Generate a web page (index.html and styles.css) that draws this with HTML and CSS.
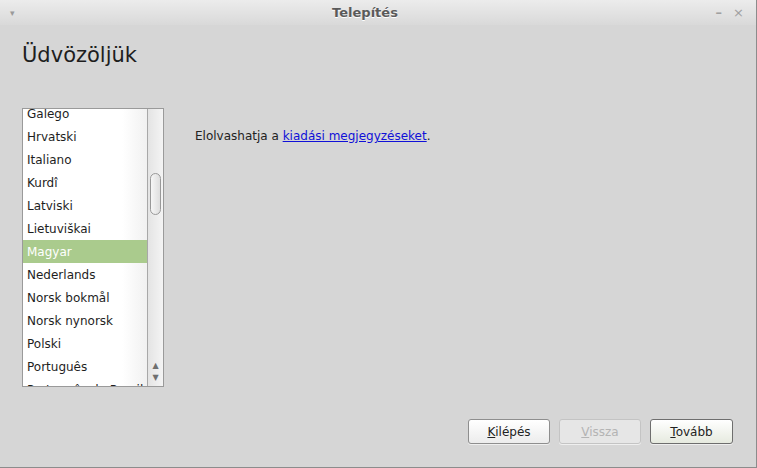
FILE: index.html
```html
<!DOCTYPE html>
<html lang="hu">
<head>
    <meta charset="UTF-8">
    <title>Telepítés</title>
    <link rel="stylesheet" href="styles.css">
</head>
<body>
    <div class="window">
        <div class="titlebar">
            <span class="menu-btn">&#9662;</span>
            <span class="title">Telepítés</span>
            <span class="win-btns">
                <span class="min">&#8211;</span>
                <span class="close">&#215;</span>
            </span>
        </div>

        <div class="content">
            <h1>Üdvözöljük</h1>

            <div class="main">
                <div class="listbox">
                    <ul class="langs">
                        <li>Galego</li>
                        <li>Hrvatski</li>
                        <li>Italiano</li>
                        <li>Kurdî</li>
                        <li>Latviski</li>
                        <li>Lietuviškai</li>
                        <li class="selected">Magyar</li>
                        <li>Nederlands</li>
                        <li>Norsk bokmål</li>
                        <li>Norsk nynorsk</li>
                        <li>Polski</li>
                        <li>Português</li>
                        <li>Português do Brasil</li>
                    </ul>
                    <div class="scrollbar">
                        <div class="thumb"></div>
                        <div class="arrows">
                            <span>&#9650;</span>
                            <span>&#9660;</span>
                        </div>
                    </div>
                </div>

                <p class="notes">Elolvashatja a <a href="#">kiadási megjegyzéseket</a>.</p>
            </div>

            <div class="buttons">
                <button><u>K</u>ilépés</button>
                <button disabled><u>V</u>issza</button>
                <button class="default"><u>T</u>ovább</button>
            </div>
        </div>
    </div>
</body>
</html>
```

FILE: styles.css
```css
html, body {
    margin: 0;
    height: 100%;
}

body {
    font-family: "DejaVu Sans", sans-serif;
    font-size: 12px;
    color: #222;
    background: #d6d6d6;
}

.window {
    height: 468px;
    box-sizing: border-box;
    border-right: 1px solid #8c8c8c;
    border-bottom: 1px solid #8c8c8c;
    display: flex;
    flex-direction: column;
    background: #d6d6d6;
}

.titlebar {
    height: 25px;
    flex: none;
    display: flex;
    align-items: center;
    padding: 0 10px;
    background: linear-gradient(#ececec, #d9d9d9);
}

.menu-btn {
    font-size: 9px;
    color: #9a9a9a;
    width: 40px;
}

.title {
    flex: 1;
    text-align: center;
    font-weight: bold;
    font-size: 13px;
    color: #5a5a5a;
    text-shadow: 0 1px 0 #fff;
    margin-top: -1px;
    padding-right: 24px;
}

.win-btns {
    width: 40px;
    display: flex;
    justify-content: flex-end;
    gap: 11px;
    color: #a0a0a0;
    font-size: 13px;
    padding-right: 2px;
}

.win-btns .min {
    font-weight: bold;
}

.content {
    flex: 1;
    display: flex;
    flex-direction: column;
    padding: 0 23px 0 22px;
}

h1 {
    margin: 16px 0 0;
    font-weight: normal;
    font-size: 21px;
    line-height: 28px;
    color: #1e1e1e;
}

.main {
    display: flex;
    margin-top: 39px;
    gap: 31px;
}

.listbox {
    display: flex;
    width: 142px;
    height: 279px;
    box-sizing: border-box;
    border: 1px solid #9a9a9a;
    background: #fff;
    overflow: hidden;
}

.langs {
    flex: 1;
    list-style: none;
    margin: -7px 0 0;
    padding: 0;
    border-right: 1px solid #a8a8a8;
    background: linear-gradient(90deg, #fff 80%, #f1f1f1);
}

.langs li {
    height: 23px;
    box-sizing: border-box;
    padding: 1px 0 0 4px;
    line-height: 23px;
    white-space: nowrap;
    color: #1e1e1e;
}

.langs li.selected {
    background: #aacb8d;
    color: #fff;
}

.scrollbar {
    width: 15px;
    flex: none;
    display: flex;
    flex-direction: column;
    align-items: center;
    background: linear-gradient(90deg, #e4e4e4, #f4f4f4);
}

.thumb {
    margin-top: 64px;
    width: 11px;
    height: 42px;
    box-sizing: border-box;
    border: 1px solid #999;
    border-radius: 6px;
    background: linear-gradient(90deg, #f6f6f6, #dedede);
}

.arrows {
    margin-top: auto;
    margin-bottom: 2px;
    display: flex;
    flex-direction: column;
    font-size: 8px;
    line-height: 12px;
    color: #6f6f6f;
}

.notes {
    margin: 21px 0 0;
    color: #222;
}

.notes a {
    color: #1010d8;
}

.buttons {
    margin-top: auto;
    margin-bottom: 23px;
    display: flex;
    justify-content: flex-end;
    gap: 9px;
}

.buttons button {
    width: 82px;
    height: 25px;
    font-family: "DejaVu Sans", sans-serif;
    font-size: 12px;
    color: #222;
    border: 1px solid #8e8e8e;
    border-radius: 3px;
    background: linear-gradient(#ffffff, #ececec);
    box-shadow: 0 1px 0 rgba(255, 255, 255, 0.6);
    padding: 0;
}

.buttons button.default {
    width: 83px;
    border-color: #6e6e6e;
    background: linear-gradient(#ffffff, #e6eadf);
}

.buttons button:disabled {
    color: #b4b4b4;
    border-color: #c4c4c4;
    background: #e6e6e6;
}
```
